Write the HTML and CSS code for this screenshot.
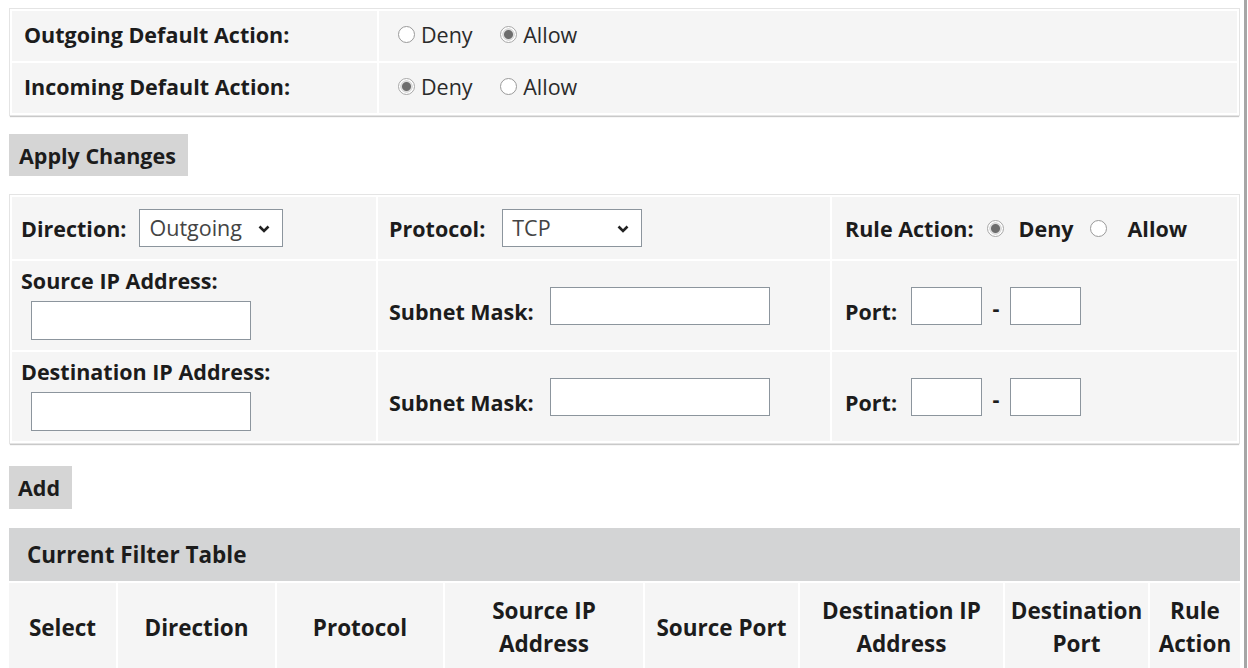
FILE: index.html
```html
<!DOCTYPE html>
<html>
<head>
<meta charset="utf-8">
<link rel="stylesheet" href="styles.css">
</head>
<body>
<div class="page">
  <table class="box defaults">
    <tr>
      <td class="lbl-cell">Outgoing Default Action:</td>
      <td class="val-cell">
        <label class="opt"><span class="radio"></span>Deny</label>
        <label class="opt"><span class="radio on"></span>Allow</label>
      </td>
    </tr>
    <tr>
      <td class="lbl-cell">Incoming Default Action:</td>
      <td class="val-cell">
        <label class="opt"><span class="radio on"></span>Deny</label>
        <label class="opt"><span class="radio"></span>Allow</label>
      </td>
    </tr>
  </table>

  <div class="btn-row"><button class="btn apply">Apply Changes</button></div>

  <table class="box rule">
    <tr class="r1">
      <td class="c1"><div class="line"><span class="b">Direction:</span>
        <span class="sel dir"><span class="sel-text">Outgoing</span><svg class="chev" viewBox="0 0 12 8" width="12" height="8"><path d="M1.5 1.5 L6 6 L10.5 1.5" fill="none" stroke="#222" stroke-width="2.6"/></svg></span></div>
      </td>
      <td class="c2"><div class="line"><span class="b">Protocol:</span>
        <span class="sel proto"><span class="sel-text">TCP</span><svg class="chev" viewBox="0 0 12 8" width="12" height="8"><path d="M1.5 1.5 L6 6 L10.5 1.5" fill="none" stroke="#222" stroke-width="2.6"/></svg></span></div>
      </td>
      <td class="c3"><div class="line"><span class="b">Rule Action:</span>
        <span class="radio on ra1"></span><span class="b">Deny</span>
        <span class="radio ra2"></span><span class="b">Allow</span></div>
      </td>
    </tr>
    <tr class="r2">
      <td class="c1"><div class="b stack-lbl">Source IP Address:</div><span class="inp ip"></span></td>
      <td class="c2"><div class="line"><span class="b low">Subnet Mask:</span><span class="inp mask"></span></div></td>
      <td class="c3"><div class="line"><span class="b low">Port:</span><span class="inp port p1"></span><span class="dash">-</span><span class="inp port"></span></div></td>
    </tr>
    <tr class="r3">
      <td class="c1"><div class="b stack-lbl">Destination IP Address:</div><span class="inp ip"></span></td>
      <td class="c2"><div class="line"><span class="b low">Subnet Mask:</span><span class="inp mask"></span></div></td>
      <td class="c3"><div class="line"><span class="b low">Port:</span><span class="inp port p1"></span><span class="dash">-</span><span class="inp port"></span></div></td>
    </tr>
  </table>

  <div class="btn-row add-row"><button class="btn add">Add</button></div>

  <div class="filter-title">Current Filter Table</div>
  <table class="filter">
    <colgroup>
      <col class="w1"><col class="w2"><col class="w3"><col class="w4">
      <col class="w5"><col class="w6"><col class="w7"><col>
    </colgroup>
    <tr>
      <th>Select</th>
      <th>Direction</th>
      <th>Protocol</th>
      <th>Source IP<br>Address</th>
      <th>Source Port</th>
      <th>Destination IP<br>Address</th>
      <th>Destination<br>Port</th>
      <th>Rule<br>Action</th>
    </tr>
  </table>
</div>
</body>
</html>
```

FILE: styles.css
```css
html, body {
  margin: 0;
  padding: 0;
  background: #fff;
  overflow: hidden;
}
body {
  font-family: "Open Sans", "Noto Sans", sans-serif;
  font-size: 21.5px;
  color: #1c1c1c;
}
.page {
  width: 1247px;
  height: 668px;
  padding: 8px 4px 0 9px;
  box-sizing: border-box;
  border-right: 3px solid #a6a6a6;
}
.b { font-weight: 700; }

table { border-collapse: separate; }

.box {
  width: 1231px;
  border: 1px solid #e4e4e4;
  border-spacing: 2px;
  box-shadow: 0 2px 1px -1px #c9c9c9;
}
.box td {
  background: #f5f5f5;
  padding: 0;
}

/* defaults */
.defaults td { height: 47px; padding-bottom: 3px; }
.lbl-cell {
  width: 353px;
  padding-left: 12px !important;
  font-weight: 700;
}
.val-cell { padding-left: 19px !important; }
.opt {
  display: inline-flex;
  align-items: center;
  margin-right: 22px;
  color: #2a2a2a;
}

.radio {
  display: inline-block;
  width: 15px;
  height: 15px;
  border: 1px solid #9a9a9a;
  border-radius: 50%;
  background: #fff;
  margin-right: 6px;
  box-sizing: content-box;
  flex: none;
}
.radio.on {
  background: radial-gradient(circle, #6d6d6d 0 4px, #dcdcdc 5px 6px, #fff 6.5px);
  border-color: #a8a8a8;
}

.btn-row { padding: 18px 0 18px 0; }
.btn {
  font-family: inherit;
  font-size: 21.5px;
  font-weight: 700;
  color: #1c1c1c;
  background: #d5d5d5;
  border: none;
  border-radius: 0;
  height: 42px;
  padding: 0 0 0 10px;
  margin: 0;
  text-align: left;
}
.apply { width: 179px; }
.add-row { padding: 22px 0 19px 0; }
.add { width: 63px; padding-left: 9px; height: 43px; }

/* rule table */
.rule .c1 { width: 355px; padding-left: 9px; }
.rule .c2 { width: 441px; padding-left: 11px; }
.rule .c3 { padding-left: 13px; }
.rule .r1 td { height: 62px; }
.rule .r2 td, .rule .r3 td { height: 89px; }
.rule .r2 .c1, .rule .r3 .c1 { vertical-align: top; }

.line {
  display: flex;
  align-items: center;
  white-space: nowrap;
}

.sel {
  position: relative;
  display: inline-block;
  height: 36px;
  border: 1px solid #8c959d;
  background: #fff;
  box-sizing: content-box;
  flex: none;
}
.sel-text {
  display: block;
  line-height: 36px;
  padding-left: 9px;
  color: #444;
  font-weight: 400;
}
.chev {
  position: absolute;
  right: 12px;
  top: 15px;
}
.dir { width: 142px; margin-left: 13px; }
.proto { width: 138px; margin-left: 17px; }

.ra1 { margin-left: 13px; margin-right: 15px; }
.ra2 { margin-left: 16px; margin-right: 21px; }

.stack-lbl { line-height: 26px; padding-top: 7px; }
.inp {
  display: inline-block;
  height: 36px;
  border: 1px solid #8c959d;
  background: #fff;
  flex: none;
}
.ip { width: 218px; height: 37px; margin-left: 10px; margin-top: 7px; }
.mask { width: 218px; margin-left: 16px; }
.low { margin-top: 12px; }
.port { width: 69px; }
.p1 { margin-left: 14px; }
.dash { display: inline-block; width: 28px; text-align: center; font-weight: 700; margin-top: 4px; }

/* filter */
.filter-title {
  width: 1213px;
  height: 53px;
  line-height: 53px;
  background: #d3d4d5;
  padding-left: 18px;
  font-weight: 700;
  font-size: 22.5px;
}
.filter {
  width: 1231px;
  border-spacing: 0;
  table-layout: fixed;
  margin-top: 2px;
}
.w1 { width: 109px; }
.w2 { width: 159px; }
.w3 { width: 168px; }
.w4 { width: 200px; }
.w5 { width: 155px; }
.w6 { width: 205px; }
.w7 { width: 145px; }
.filter th {
  background: #f5f5f5;
  height: 88px;
  font-size: 22.5px;
  font-weight: 700;
  text-align: center;
  line-height: 33px;
  border-right: 2px solid #fff;
  padding: 0;
  vertical-align: middle;
  white-space: nowrap;
}
.filter th:last-child { border-right: none; }
```
